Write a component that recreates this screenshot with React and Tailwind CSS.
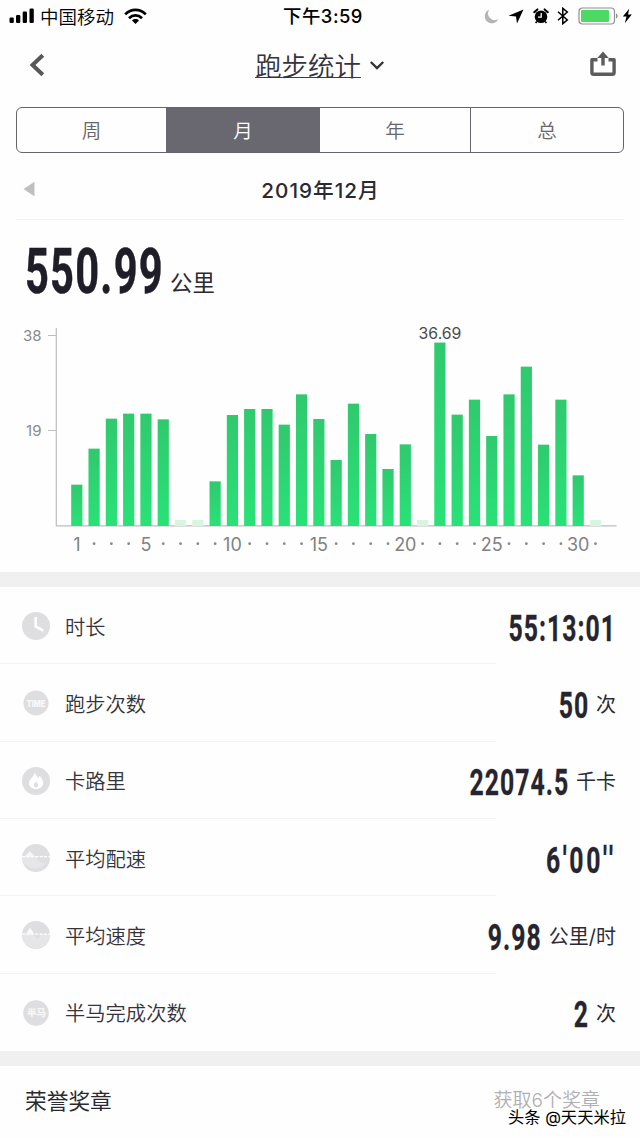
const days = [
  8.27, 15.47, 21.47, 22.47, 22.47, 21.33, 0, 0, 8.93, 22.2, 23.4, 23.4, 20.27,
  26.33, 21.4, 13.2, 24.47, 18.4, 11.4, 16.33, 0, 36.69, 22.27, 25.27, 18,
  26.33, 31.87, 16.27, 25.27, 10.13, 0,
];

const tabs = ["周", "月", "年", "总"];

const StatusBar = () => (
  <div className="flex h-8 items-center justify-between pl-[9px] pr-[7px] text-black">
    <div className="flex w-[240px] items-center">
      <svg width="26" height="16" viewBox="0 0 26 16" fill="currentColor">
        <rect x="0.5" y="9.5" width="4.3" height="5.5" rx="1.2" />
        <rect x="7" y="7" width="4.3" height="8" rx="1.2" />
        <rect x="13.7" y="3.5" width="4.3" height="11.5" rx="1.2" />
        <rect x="20.5" y="0.5" width="4.3" height="14.5" rx="1.2" />
      </svg>
      <span className="ml-[5px] pt-0.5 text-[18.5px] font-[350] leading-none">中国移动</span>
      <svg className="ml-2.5" width="23" height="17" viewBox="0 0 23 17" fill="none" stroke="currentColor" strokeWidth="2.7">
        <path d="M1.2 6.4C7 .3 16 .3 21.8 6.4" />
        <path d="M5 10.2c3.8-3.8 9.2-3.8 13 0" />
        <path d="M11.5 16 8 12.5c2-1.9 5-1.9 7 0Z" fill="currentColor" stroke="none" />
      </svg>
    </div>
    <div className="pl-1 text-[18.4px] font-medium leading-none tracking-[0.5px]">下午3:59</div>
    <div className="flex w-[240px] items-center justify-end">
      <svg width="15" height="15" viewBox="0 0 15 15">
        <path d="M5.2.8A7 7 0 1 0 14.2 10 6.6 6.6 0 0 1 5.2.8Z" fill="#b4b4b4" />
      </svg>
      <svg className="ml-[9px]" width="16" height="15" viewBox="0 0 16 15">
        <path d="M15.5.5 9 14.5 8 7.4.5 6.8Z" fill="currentColor" />
      </svg>
      <svg className="ml-[9px]" width="16" height="16" viewBox="0 0 16 16" fill="none">
        <circle cx="8" cy="8.8" r="6.3" fill="currentColor" />
        <path d="M1.2 4.2 4.4 1.4M14.8 4.2 11.6 1.4" stroke="currentColor" strokeWidth="2" strokeLinecap="round" />
        <path d="M3.8 13.5 2.6 15M12.2 13.5l1.2 1.5" stroke="currentColor" strokeWidth="1.6" />
        <path d="M8.2 5v4.2H5" stroke="#fff" strokeWidth="1.3" />
      </svg>
      <svg className="ml-2" width="12" height="18" viewBox="0 0 12 18" fill="none" stroke="currentColor" strokeWidth="1.5">
        <path d="M1 4.8 10.3 13 5.8 16.7V1.3L10.3 5 1 13.2" />
      </svg>
      <svg className="ml-[9px]" width="41" height="18" viewBox="0 0 41 18">
        <rect x="1" y="1" width="35.5" height="16" rx="3.5" fill="#fff" stroke="#8f8f8f" strokeWidth="1.2" />
        <rect x="3" y="3" width="28" height="12" rx="1.2" fill="#4cd964" />
        <path d="M38 6.5c2.2.8 2.2 4.2 0 5Z" fill="#8f8f8f" />
      </svg>
      <svg className="ml-[3px]" width="11" height="16" viewBox="0 0 11 16">
        <path d="M7.2.8.8 8.6h3.7L2.8 15.2l7-8.6H6Z" fill="currentColor" />
      </svg>
    </div>
  </div>
);

const Header = () => (
  <header className="flex h-[66px] items-center justify-between px-[22px]">
    <div className="flex w-16 pl-1.5">
      <svg width="20" height="24" viewBox="0 0 20 24" fill="none" stroke="#58585a" strokeWidth="4">
        <path d="M14.8 2.2 4.5 12l10.3 9.8" />
      </svg>
    </div>
    <div className="flex items-center">
      <h1 className="h-[25px] border-b-[1.5px] border-[#3d3c46] text-[26.4px] font-[350] leading-[26px] text-[#34333e]">跑步统计</h1>
      <svg className="ml-2" width="16" height="11" viewBox="0 0 16 11" fill="none" stroke="#34333e" strokeWidth="2.4">
        <path d="M1.8 2 8 8l6.2-6" />
      </svg>
    </div>
    <div className="flex w-16 justify-end">
      <svg className="mr-px" width="28" height="28" viewBox="0 0 28 28" fill="none" stroke="#5b5b5d" strokeWidth="3.4">
        <path d="M8.5 8.7H2.9v12.8q0 1.8 1.8 1.8h18.6q1.8 0 1.8-1.8V8.7h-5.6" strokeLinejoin="round" />
        <path d="M14 14.5V4" />
        <path d="M8.3 7 14 .6 19.7 7Z" fill="#5b5b5d" stroke="none" />
      </svg>
    </div>
  </header>
);

const Chart = () => (
  <svg className="block" width="640" height="252" viewBox="0 320 640 252">
    <defs>
      <linearGradient id="bar" x1="0" y1="0" x2="0" y2="1">
        <stop offset="0" stopColor="#30c96e" />
        <stop offset="1" stopColor="#29e277" />
      </linearGradient>
    </defs>
    <g stroke="#bdbdbd" strokeWidth="1.2">
      <path d="M56.3 328V525.8H616.5" fill="none" />
      <path d="M48 335.5h8M48 430.5h8" />
    </g>
    <g fill="#8a8a8c" fontSize="15" textAnchor="end">
      <text x="41.5" y="341">38</text>
      <text x="41.5" y="436">19</text>
    </g>
    {days.map((km, i) => {
      const x = 76.8 + i * 17.29;
      const day = i + 1;
      const height = km ? km * 5 : 6;
      return (
        <g key={day}>
          <rect x={x - 5.6} y={526 - height} width="11.2" height={height} fill={km ? "url(#bar)" : "#d6f6e2"} />
          {day === 1 || day % 5 === 0 ? (
            <text x={x} y="550.6" fontSize="18" fill="#818184" textAnchor="middle">{day}</text>
          ) : (
            <circle cx={x} cy="543.7" r="1.4" fill="#8a8a8c" />
          )}
        </g>
      );
    })}
    <text x="440" y="338.8" fontSize="15.8" fill="#4a4a50" textAnchor="middle">36.69</text>
  </svg>
);

const Disc = ({ r = 14, children }) => (
  <svg className="mt-0.5" width="28" height="28" viewBox="0 0 28 28" fill="none">
    <circle cx="14" cy="14" r={r} fill="#dedee0" />
    {children}
  </svg>
);

const ClockIcon = () => (
  <Disc>
    <path d="M13.7 5v9.4l7.5 4.2" stroke="#fff" strokeWidth="2.6" />
  </Disc>
);

const TimesIcon = () => (
  <Disc r={12.5}>
    <text x="14" y="17.6" fontSize="9.5" fontWeight="900" fill="#f8f8f9" textAnchor="middle" textLength="18.5" lengthAdjust="spacingAndGlyphs">TIME</text>
  </Disc>
);

const FlameIcon = () => (
  <Disc>
    <path d="M13 5.2c.5 3.4 2.3 3.5 2.8 5.8.8-.5 1.4-1.1 1.6-2.2 2.4 2.4 3.7 4.8 3.7 7.2 0 3.8-3.2 6-7 6s-7-2.2-7-6c0-3.8 4-5.4 5.9-10.8Z" fill="#fff" />
    <path d="M14 14.5c1.5 1.7 2.1 2.8 2.1 4a2.1 2.1 0 0 1-4.2 0c0-1.2.7-2.3 2.1-4Z" fill="#dedee0" />
  </Disc>
);

const PaceIcon = () => (
  <Disc>
    <path d="M.5 13.5 8 7l6 6 4 5 3 1.5 4-1.5A14 14 0 0 1 .3 16Z" fill="#e6e6e8" />
    <path d="M2.5 12.5 8 7.5l4.8 5Z" fill="#f5f5f6" />
    <path d="M0 12.7h28" stroke="#fff" strokeWidth="1.2" strokeDasharray="3 1.4" />
  </Disc>
);

const SpeedIcon = () => (
  <Disc>
    <path d="M.5 13.5 8 7l7 11 5-5h8A14 14 0 0 1 .3 16Z" fill="#e6e6e8" />
    <path d="m4.8 12.8 3.3-6.3 3.8 6.3Z" fill="#fafafa" />
    <path d="M0 13.2h28" stroke="#fff" strokeWidth="1.2" strokeDasharray="3 1.4" />
  </Disc>
);

const HalfIcon = () => (
  <Disc r={12.8}>
    <text x="14.4" y="17" fontSize="9.5" fontWeight="900" fill="#f6f6f7" textAnchor="middle">半马</text>
  </Disc>
);

const rows = [
  { icon: ClockIcon, label: "时长", value: "55:13:01" },
  { icon: TimesIcon, label: "跑步次数", value: "50", unit: "次" },
  { icon: FlameIcon, label: "卡路里", value: "22074.5", unit: "千卡" },
  { icon: PaceIcon, label: "平均配速", value: "6'00''", spacing: "tracking-[4px]" },
  { icon: SpeedIcon, label: "平均速度", value: "9.98", unit: "公里/时" },
  { icon: HalfIcon, label: "半马完成次数", value: "2", unit: "次" },
];

const StatRow = ({ icon: Icon, label, value, unit, spacing = "tracking-[1.6px]", last }) => (
  <li className="flex flex-1 flex-col">
    <div className="flex flex-1 items-center pl-[22px] pr-6">
      <Icon />
      <span className="ml-[15px] pt-[5px] text-[20.3px] font-[350] leading-none text-[#35343d]">{label}</span>
      <div className="ml-auto flex items-center pt-[5px]">
        <span className={`inline-block origin-right scale-x-[0.66] font-['Roboto'] text-[37.5px] font-bold leading-[36px] text-[#26252f] [-webkit-text-stroke:0.3px_#26252f] ${spacing}`}>
          {value}
        </span>
        {unit && <span className="ml-[7px] text-[20px] leading-none text-[#2c2b34]">{unit}</span>}
      </div>
    </div>
    <div className={last ? "h-px" : "h-px w-[496px] bg-[#f3f3f3]"} />
  </li>
);

export default function App() {
  return (
    <div className="relative flex h-[1138px] w-[640px] flex-col overflow-hidden bg-[#fefefe] font-['Inter','Noto_Sans_CJK_SC',sans-serif]">
      <StatusBar />
      <Header />

      {/* Period tabs */}
      <div className="mx-4 mt-[9px] grid h-[46px] grid-cols-[149px_154px_150px_1fr] overflow-hidden rounded-md border-[1.5px] border-[#66656d]">
        {tabs.map((tab, i) => (
          <button
            key={tab}
            className={
              i === 1
                ? "bg-[#696871] pt-[3px] text-[19.5px] font-[350] text-white"
                : i === 3
                  ? "border-l-[1.5px] border-[#66656d] pt-[3px] text-[19.5px] font-[350] text-[#66656c]"
                  : "pt-[3px] text-[19.5px] font-[350] text-[#66656c]"
            }
          >
            {tab}
          </button>
        ))}
      </div>

      {/* Month switcher */}
      <div className="mx-4 flex h-[67px] items-center border-b border-[#f3f3f3] pt-[6px]">
        <svg className="ml-[7px]" width="12" height="16" viewBox="0 0 12 16">
          <path d="M11.5.8v14.4L.5 8Z" fill="#bfbfc1" />
        </svg>
        <div className="flex-1 pr-[18px] pt-[3px] text-center text-[20.7px] font-medium tracking-[1px] text-[#2a2932]">
          2019年12月
        </div>
      </div>

      {/* Monthly total */}
      <div className="flex h-[100px] items-baseline pl-[25px] pt-[20px]">
        <div className="w-[145px]">
          <span className="inline-block origin-left scale-x-[0.66] font-['Roboto'] text-[63px] font-bold leading-[64px] tracking-[1.9px] text-[#1e1d28] [-webkit-text-stroke:0.5px_#1e1d28]">
            550.99
          </span>
        </div>
        <span className="relative -top-0.5 text-[22.4px] leading-none text-[#2a2932]">公里</span>
      </div>

      <Chart />
      <div className="h-[15px] bg-[#f0f0f0]" />

      <ul className="flex h-[464px] flex-col">
        {rows.map((row, i) => (
          <StatRow key={row.label} {...row} last={i === rows.length - 1} />
        ))}
      </ul>
      <div className="h-[15px] bg-[#f0f0f0]" />

      {/* Medals */}
      <div className="flex h-[72px] items-center justify-between pl-[25px] pr-10">
        <span className="text-[21.7px] leading-none text-[#2a2932]">荣誉奖章</span>
        <span className="pb-[3px] text-[19px] font-[350] leading-none text-[#b0b0b2]">获取6个奖章</span>
      </div>

      <div className="absolute bottom-[13px] right-[14px] whitespace-nowrap text-[16.3px] leading-none text-black [text-shadow:-1px_-1px_0_#fff,1px_-1px_0_#fff,-1px_1px_0_#fff,1px_1px_0_#fff]">
        头条 @天天米拉
      </div>
    </div>
  );
}
